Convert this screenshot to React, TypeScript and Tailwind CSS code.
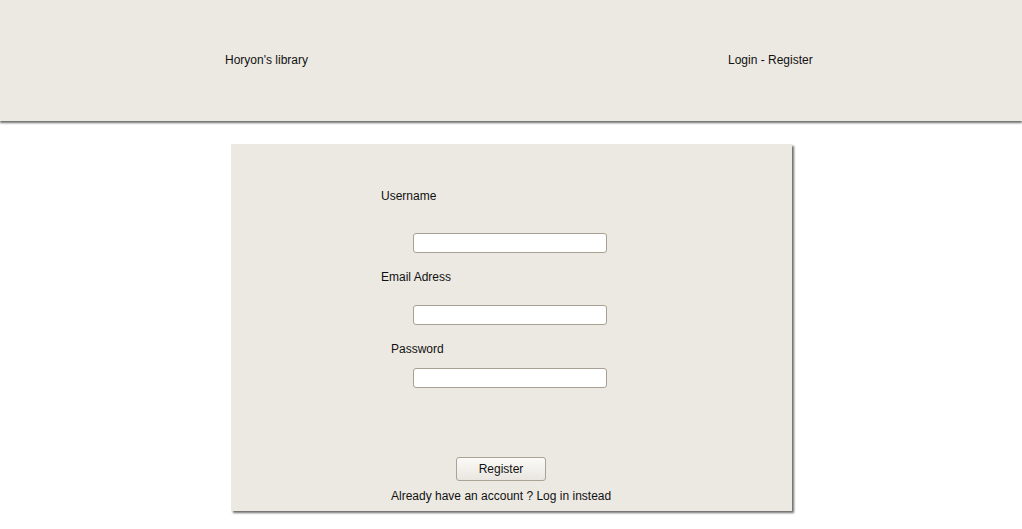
const Field = ({ label, labelMl, gapTop, inputTop, type = 'text' }: { label: string; labelMl: string; gapTop: string; inputTop: string; type?: string }) => (
  <div className={gapTop}>
    <label className={`block ${labelMl} h-[14px] leading-[14px]`}>{label}</label>
    <input
      type={type}
      className={`block ${inputTop} ml-[182px] h-[20px] w-[194px] rounded-[3px] border border-[#a8a092] bg-white outline-none`}
    />
  </div>
);

export default function App() {
  return (
    <div className="min-h-[529px] bg-white text-[12px] text-[#111]" style={{ fontFamily: '"Liberation Sans", Arial, sans-serif' }}>
      {/* Header */}
      <header className="flex h-[121px] items-center bg-[#ece9e3] pb-[2px] shadow-[0_2px_2px_#6e6e6e]">
        <div className="ml-[225px] leading-[14px]">Horyon's library</div>
        <div className="ml-[420px] leading-[14px]">Login - Register</div>
      </header>

      {/* Register form panel */}
      <div className="ml-[231px] mt-[23px] h-[367px] w-[561px] bg-[#ece9e3] pt-[45px] shadow-[2px_2px_2px_#6e6e6e]">
        <Field label="Username" labelMl="ml-[150px]" gapTop="mt-0" inputTop="mt-[30px]" />
        <Field label="Email Adress" labelMl="ml-[150px]" gapTop="mt-[17px]" inputTop="mt-[21px]" />
        <Field label="Password" labelMl="ml-[160px]" gapTop="mt-[17px]" inputTop="mt-[12px]" type="password" />

        <button className="ml-[225px] mt-[69px] block h-[24px] w-[90px] rounded-[3px] border border-[#aaa295] bg-gradient-to-b from-[#fbfaf8] to-[#e9e6e0] leading-[22px]">
          Register
        </button>
        <p className="ml-[160px] mt-[8px] leading-[14px]">Already have an account ? Log in instead</p>
      </div>
    </div>
  );
}
